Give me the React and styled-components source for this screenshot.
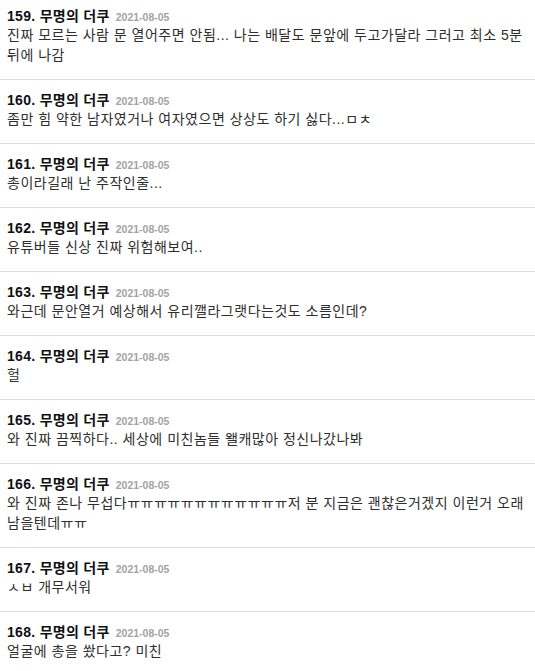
import React from "react";
import styled, { createGlobalStyle } from "styled-components";

const GlobalStyle = createGlobalStyle`
  html, body {
    margin: 0;
    padding: 0;
    background: #ffffff;
  }
  body {
    font-family: "Liberation Sans", "Noto Sans CJK KR", sans-serif;
  }
`;

const List = styled.div`
  display: flex;
  flex-direction: column;
  width: 535px;
`;

const Item = styled.div`
  padding: 11px 7px 14px 7px;
  border-bottom: 1px solid #dddddd;

  &:first-child {
    padding-top: 7px;
  }
`;

const Header = styled.div`
  display: flex;
  align-items: baseline;
  gap: 6px;
  height: 18px;
  line-height: 18px;
`;

const Name = styled.span`
  font-size: 14px;
  letter-spacing: 0.3px;
  font-weight: 700;
  color: #111111;
`;

const DateText = styled.span`
  font-size: 10.5px;
  font-weight: 700;
  color: #a3a3a3;
`;

const Body = styled.div`
  font-size: 14px;
  letter-spacing: 0.5px;
  line-height: 20px;
  color: #2e2e2e;
  word-break: keep-all;
`;

const comments = [
  { no: 159, text: "진짜 모르는 사람 문 열어주면 안됨... 나는 배달도 문앞에 두고가달라 그러고 최소 5분 뒤에 나감" },
  { no: 160, text: "좀만 힘 약한 남자였거나 여자였으면 상상도 하기 싫다...ㅁㅊ" },
  { no: 161, text: "총이라길래 난 주작인줄..." },
  { no: 162, text: "유튜버들 신상 진짜 위험해보여.." },
  { no: 163, text: "와근데 문안열거 예상해서 유리깰라그랫다는것도 소름인데?" },
  { no: 164, text: "헐" },
  { no: 165, text: "와 진짜 끔찍하다.. 세상에 미친놈들 왤캐많아 정신나갔나봐" },
  { no: 166, text: "와 진짜 존나 무섭다ㅠㅠㅠㅠㅠㅠㅠㅠㅠㅠㅠㅠ저 분 지금은 괜찮은거겠지 이런거 오래 남을텐데ㅠㅠ" },
  { no: 167, text: "ㅅㅂ 개무서워" },
  { no: 168, text: "얼굴에 총을 쐈다고? 미친" },
];

export default function App() {
  return (
    <>
      <GlobalStyle />
      <List>
        {comments.map((c) => (
          <Item key={c.no}>
            <Header>
              <Name>{c.no}. 무명의 더쿠</Name>
              <DateText>2021-08-05</DateText>
            </Header>
            <Body>{c.text}</Body>
          </Item>
        ))}
      </List>
    </>
  );
}
